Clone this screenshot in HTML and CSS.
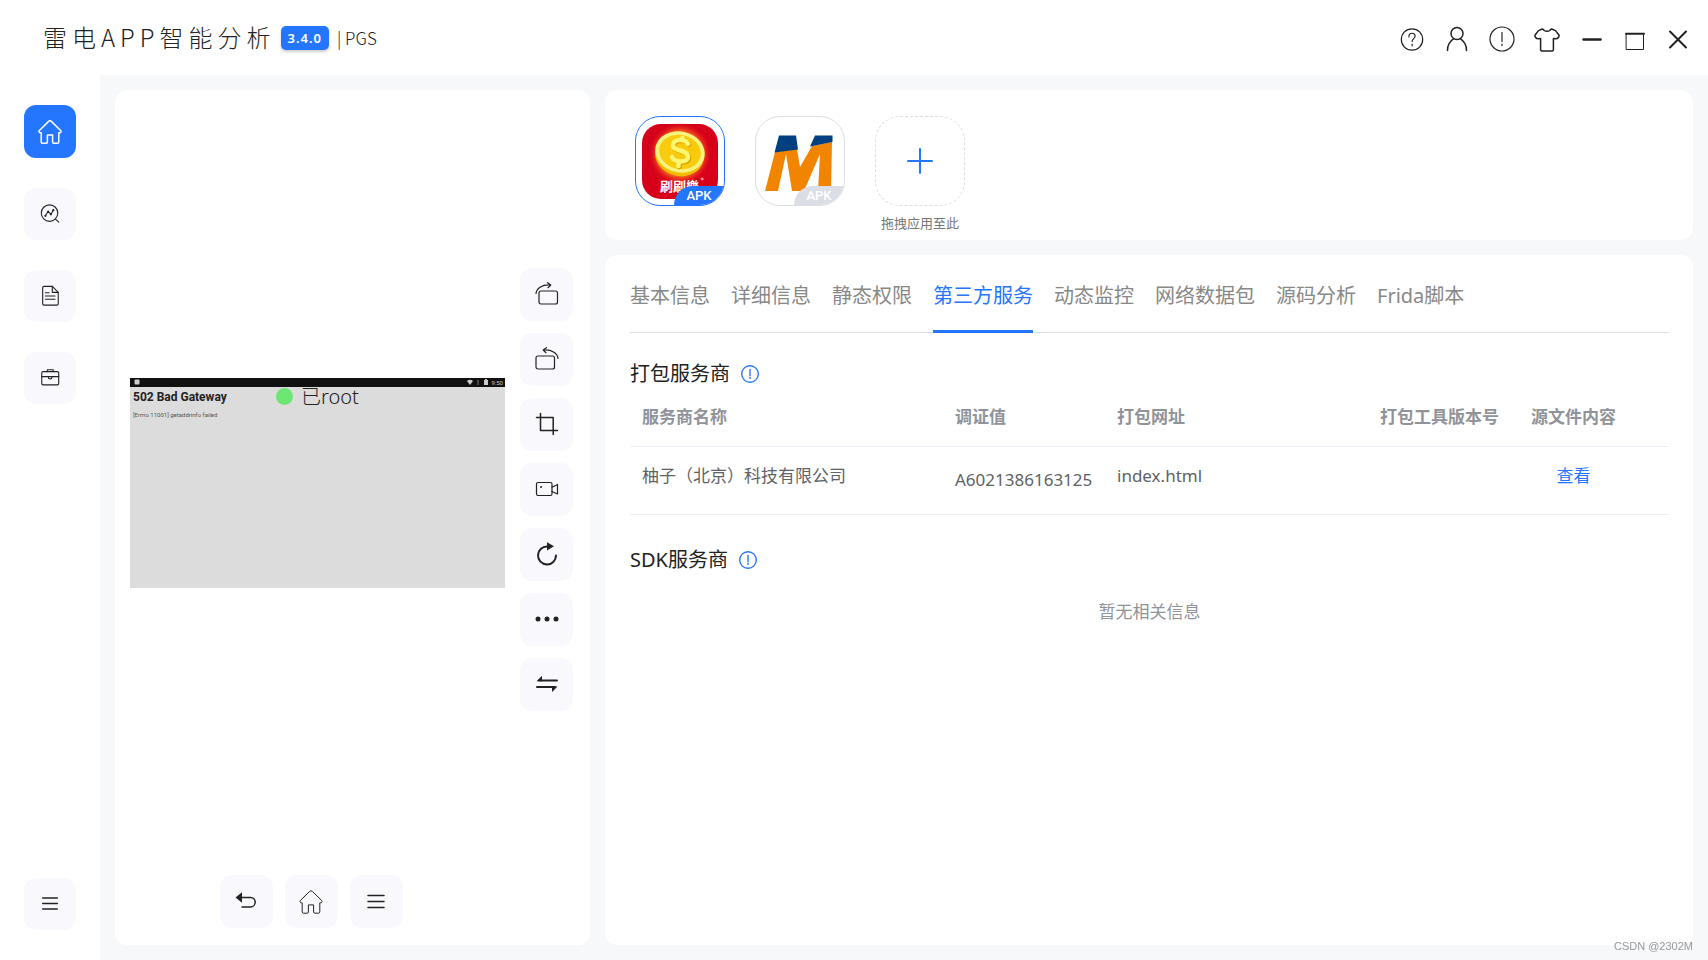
FILE: index.html
```html
<!DOCTYPE html>
<html lang="zh-CN">
<head>
<meta charset="utf-8">
<title>雷电APP智能分析</title>
<link rel="stylesheet" href="styles.css">
</head>
<body>
<svg class="defs" aria-hidden="true">
  <symbol id="i-home" viewBox="0 0 24 24"><path d="M10.6 1.4a2 2 0 0 1 2.800 0l9.200 9.100c.9.9.3 2.300-.9 2.300h-.9v9.100c0 .8-.5 1.300-1.300 1.300h-3.800c-.7 0-1.100-.4-1.100-1.100v-7.200h-5.200v7.200c0 .7-.4 1.100-1.100 1.100H4.500c-.8 0-1.300-.5-1.300-1.300v-9.100h-.9c-1.200 0-1.800-1.400-.9-2.300z"/></symbol>
  <symbol id="i-menu" viewBox="0 0 24 24"><path d="M4 5.500h16M4 11.500h16M4 17.500h16"/></symbol>
  <symbol id="i-alert" viewBox="0 0 26 26"><circle cx="13" cy="13" r="12"/><path d="M13 6.500v9"/><path d="M13 18v1.500"/></symbol>
</svg>
<header class="topbar">
  <h1 class="brand">雷电APP智能分析</h1>
  <span class="version">3.4.0</span>
  <span class="device">| PGS</span>
  <div class="actions">
    <button aria-label="帮助"><svg viewBox="0 0 26 26"><circle cx="13" cy="13.500" r="10.700"/><path d="M9.900 10.800c0-4.800 6.400-4.500 6.200-.6-.1 2.300-3 2.600-3 5.300M13.100 18v1.800"/></svg></button>
    <button aria-label="用户"><svg viewBox="0 0 26 26" class="mid"><circle cx="13" cy="7.500" r="6"/><path d="M3.500 24.500c0-5.500 2.200-9.200 6.300-11.800M22.500 24.500c0-5.500-2.200-9.200-6.300-11.800"/></svg></button>
    <button aria-label="关于"><svg><use href="#i-alert"/></svg></button>
    <button aria-label="换肤"><svg viewBox="0 0 26 26" class="mid"><path d="M8.300 3 4.500 4.600.9 9.300c-.2 1.700 1.400 3.300 3.300 3.500l2.400-.3V24l1 1h10.800l1-1V12.500l2.400.3c1.900-.2 3.500-1.800 3.300-3.500l-3.600-4.700L17.700 3c-.9 0-1.300.8-2.100 1.500-1.200 1-4 1-5.200 0C9.600 3.800 9.200 3 8.300 3z"/></svg></button>
    <div class="window">
      <button aria-label="最小化"><svg viewBox="0 0 26 26" class="heavy"><path d="M4.500 13.500h17"/></svg></button>
      <button aria-label="最大化"><svg viewBox="0 0 26 26" class="thin"><path d="M4.500 7.500h17v16h-17z"/><path d="M4 7.700h18" stroke-width="2"/></svg></button>
      <button aria-label="关闭"><svg viewBox="0 0 26 26" class="bold"><path d="m5 5.500 16 16M21 5.500l-16 16"/></svg></button>
    </div>
  </div>
</header>
<div class="shell">
  <nav class="sidebar" aria-label="主导航">
    <button class="tile active" aria-label="首页"><svg><use href="#i-home"/></svg></button>
    <button class="tile" aria-label="分析"><svg viewBox="0 0 24 24"><circle cx="11.500" cy="11" r="9"/><path d="m18 17.500 3.600 3.400M7 14l3-5 3 3.500 2.800-5.200"/><g class="dots"><circle cx="7" cy="14" r="1.200"/><circle cx="10" cy="9.200" r="1"/><circle cx="12.900" cy="12.400" r="1.200"/><circle cx="15.600" cy="7.800" r="1.200"/></g></svg></button>
    <button class="tile" aria-label="报告"><svg viewBox="0 0 24 24"><path d="M14.500 1.500h-9c-1 0-1.500.5-1.500 1.500v17.500c0 1 .5 1.500 1.500 1.500h14c1 0 1.500-.5 1.500-1.500V8z"/><path d="M14.500 1.500V8H21M7 8.500h4M7 12h10.500M7 15.500h10.500"/></svg></button>
    <button class="tile" aria-label="工具箱"><svg viewBox="0 0 24 24"><rect x="3" y="5" width="18.500" height="14.500" rx="1.500"/><path d="M9 5V3h6.500v2M3 10.500h18.500M10.200 10.500v.8c0 2.400 4 2.400 4 0v-.8"/></svg></button>
    <button class="tile last" aria-label="菜单"><svg class="mid"><use href="#i-menu"/></svg></button>
  </nav>
  <main class="content">
    <section class="card emulator">
      <div class="stage">
        <div class="screen">
          <div class="statusbar">
            <svg class="note" viewBox="0 0 6 6"><rect x=".5" y=".5" width="5" height="5" rx="1"/></svg>
            <svg class="signal" viewBox="0 0 22 6"><path d="M0 2Q3-.5 6 2L3 6z"/><path d="M10 1h2v5h-2z" opacity=".3"/><path d="M17 1h1V0h2v1h1v5h-4z"/></svg>
            <span>9:50</span>
          </div>
          <h2>502 Bad Gateway</h2>
          <p>[Errno 11001] getaddrinfo failed</p>
          <div class="root"><i></i>已root</div>
        </div>
        <div class="tools">
          <button class="tile" aria-label="向右旋转"><svg viewBox="0 0 24 24"><rect x="4" y="9" width="18.500" height="13" rx="2"/><path d="M1 11.500C1.500 6.500 6.500 2.500 15.500 3M12.500.7 15.800 3l-2.800 2.700"/></svg></button>
          <button class="tile" aria-label="向左旋转"><svg viewBox="0 0 24 24"><rect x="1" y="9" width="18.500" height="13" rx="2"/><path d="M23 11.500C22.500 6.500 17.500 2.500 8.500 3M11.500.7 8.200 3 11 5.700"/></svg></button>
          <button class="tile" aria-label="截图"><svg viewBox="0 0 24 24" class="mid"><path d="M5.500 1.500v17h17M1.500 5.500h16.700v17"/></svg></button>
          <button class="tile" aria-label="录屏"><svg viewBox="0 0 24 24"><rect x="1.500" y="5.500" width="15.500" height="13" rx="1.500"/><path d="M17 10.200l5.500-2.700v9.500L17 14.500"/><circle class="dots" cx="6" cy="10" r="1"/></svg></button>
          <button class="tile" aria-label="刷新"><svg viewBox="0 0 24 24" class="bold"><path d="M21 13.500A9 9 0 1 1 12.500 4.500"/><path class="dots" d="M12 .3 19 4.300 12 8.500z"/></svg></button>
          <button class="tile" aria-label="更多"><svg viewBox="0 0 24 24"><g class="dots"><circle cx="3" cy="12" r="2.500"/><circle cx="12" cy="12" r="2.500"/><circle cx="21" cy="12" r="2.500"/></g></svg></button>
          <button class="tile" aria-label="切换"><svg viewBox="0 0 24 24" class="bold"><path d="M4 8.500h18M2 15h18"/><path class="dots" d="M1.500 9.200 7 3.800v5.400zM22.500 14.500 17 20v-5.500z"/></svg></button>
        </div>
      </div>
      <div class="keys">
        <button class="tile" aria-label="返回"><svg viewBox="0 0 24 24" class="mid"><path d="M7 7.500h9.500a4.700 4.700 0 0 1 0 9.400H8"/><path class="dots" d="M1.500 7.500 8 2.200v10.600z"/></svg></button>
        <button class="tile" aria-label="主页"><svg class="thin"><use href="#i-home"/></svg></button>
        <button class="tile" aria-label="任务"><svg class="mid"><use href="#i-menu"/></svg></button>
      </div>
    </section>
    <div class="column">
      <section class="card apps">
        <button class="app selected" aria-label="刷刷乐">
          <svg viewBox="0 0 88 88">
            <defs><radialGradient id="glow"><stop offset=".7" stop-color="#ff7a20" stop-opacity=".8"/><stop offset="1" stop-color="#d9001b" stop-opacity="0"/></radialGradient></defs>
            <rect x="6" y="7" width="76" height="75" rx="19" fill="#d7001a"/>
            <circle cx="44" cy="37" r="32" fill="url(#glow)"/>
            <ellipse cx="43.500" cy="38.500" rx="24.500" ry="20.500" fill="#f2bd00" transform="rotate(12 43.500 38.500)"/>
            <ellipse cx="44" cy="35" rx="25" ry="20.500" fill="#f5f27d" transform="rotate(12 44 35)"/>
            <ellipse cx="44" cy="35" rx="21" ry="17" fill="#facb0c" transform="rotate(12 44 35)"/>
            <g fill="none" stroke-linecap="round" stroke-width="4.500"><path stroke="#d99b00" d="M53 28c-3-6-15-5-15 1 0 7 15 4 15 12 0 6-13 6-16 0M47.500 23v-1M43.500 46v4"/><path stroke="#fbf56f" d="M52 27c-3-6-15-5-15 1 0 7 15 4 15 12 0 6-13 6-16 0M46.500 22v-1M42.500 45v4"/></g>
            <text class="logo-text" x="24" y="74">刷刷樂</text><circle cx="66" cy="62" r="1" fill="none" stroke="#fff" stroke-width=".6"/>
          </svg>
          <span class="tag">APK</span>
        </button>
        <button class="app" aria-label="M">
          <svg viewBox="0 0 88 88"><path fill="#f28500" d="m19 35 22-3 3 18 12-21 20-4-1 49H62l2-37-16 37H36l-6-37-8 37H9z"/><path fill="#003f80" d="M23 18.500h17l2 14-23.500 3zM59 18.500h17.500V25L54 29.500z"/></svg>
          <span class="tag">APK</span>
        </button>
        <div class="add">
          <button class="app drop" aria-label="添加应用"><svg viewBox="0 0 88 88"><path d="M32 44h24M44 32v24"/></svg></button>
          <span>拖拽应用至此</span>
        </div>
      </section>
      <section class="card detail">
        <div class="tabs" role="tablist">
          <button role="tab">基本信息</button><button role="tab">详细信息</button><button role="tab">静态权限</button><button role="tab" class="current" aria-selected="true">第三方服务</button><button role="tab">动态监控</button><button role="tab">网络数据包</button><button role="tab">源码分析</button><button role="tab">Frida脚本</button>
        </div>
        <h2 class="heading">打包服务商<svg><use href="#i-alert"/></svg></h2>
        <table>
          <colgroup><col class="c-name"><col class="c-id"><col class="c-url"><col class="c-ver"><col class="c-src"></colgroup>
          <thead><tr><th>服务商名称</th><th>调证值</th><th>打包网址</th><th>打包工具版本号</th><th class="center">源文件内容</th></tr></thead>
          <tbody><tr><td>柚子（北京）科技有限公司</td><td class="id">A6021386163125</td><td>index.html</td><td></td><td class="center"><a href="#">查看</a></td></tr></tbody>
        </table>
        <h2 class="heading sdk">SDK服务商<svg><use href="#i-alert"/></svg></h2>
        <p class="empty">暂无相关信息</p>
      </section>
    </div>
  </main>
</div>
<div class="watermark">CSDN @2302M</div>
</body>
</html>
```
FILE: styles.css
```css
* { box-sizing: border-box; }
body {
  margin: 0;
  min-height: 100vh;
  display: flex;
  flex-direction: column;
  background: #fff;
  color: #222;
  font-family: "Noto Sans", "Noto Sans CJK SC", sans-serif;
  font-weight: 400;
}
h1, h2, p { margin: 0; font-weight: inherit; }
button {
  padding: 0;
  border: 0;
  background: none;
  color: inherit;
  font: inherit;
  cursor: pointer;
}
svg {
  display: block;
  fill: none;
  stroke: currentColor;
  stroke-width: 1.2;
  stroke-linecap: round;
  stroke-linejoin: round;
}
.dots { fill: currentColor; stroke: none; }
.defs { position: absolute; width: 0; height: 0; }
.thin { stroke-width: 1; }
.mid { stroke-width: 1.5; }
.bold { stroke-width: 2; }
.heavy { stroke-width: 2.5; }

.topbar {
  display: flex;
  align-items: center;
  height: 75px;
  padding: 0 15px 0 43px;
}
.brand {
  padding-bottom: 2px;
  font-family: "Noto Sans CJK SC", sans-serif;
  font-weight: 300;
  font-size: 24px;
  line-height: 36px;
  letter-spacing: 5px;
}
.version {
  margin-left: 5px;
  padding: 0 7px;
  border-radius: 5px;
  background: #2475ff;
  color: #fff;
  font-size: 13px;
  font-weight: 600;
  line-height: 24px;
  letter-spacing: 1px;
  box-shadow: 0 2px 3px #0003;
}
.device { margin-left: 8px; font-family: "Noto Sans CJK SC", sans-serif; font-size: 17px; font-weight: 300; }
.actions { display: flex; gap: 15px; margin-left: auto; padding-top: 3px; }
.actions button { display: grid; place-items: center; width: 30px; height: 30px; }
.actions svg { width: 26px; height: 26px; }
.window { display: flex; gap: 13px; }

.shell { flex: 1; display: flex; }
.sidebar {
  display: flex;
  flex-direction: column;
  gap: 30px;
  width: 100px;
  padding: 30px 24px;
}
.tile {
  display: grid;
  place-items: center;
  width: 52px;
  height: 52px;
  border-radius: 12px;
  background: #f9f9fd;
}
.tile svg { width: 24px; height: 24px; }
.sidebar .tile:not(.active) svg { width: 22px; height: 22px; }
.tile.active { height: 53px; background: #2475ff; color: #fff; }
.tile.active svg { stroke-width: 1.5; }
.tile.last { margin-top: auto; }

.content {
  flex: 1;
  display: flex;
  gap: 15px;
  min-width: 0;
  padding: 15px;
  background: #f6f8fa;
}
.card { border-radius: 12px; background: #fff; }
.emulator {
  display: flex;
  flex-direction: column;
  flex: 0 0 475px;
  padding: 0 17px 17px 15px;
}
.emulator .tile { width: 53px; height: 53px; }
.stage { flex: 1; display: flex; align-items: center; gap: 15px; }
.screen {
  position: relative;
  flex: 1;
  aspect-ratio: 375 / 210;
  background: #dcdcdc;
  font-family: Roboto, sans-serif;
}
.statusbar {
  display: flex;
  align-items: center;
  gap: 2px;
  height: 9px;
  padding: 0 2px 0 4px;
  background: #111;
  color: #ccc;
  font-size: 6px;
  line-height: 9px;
}
.statusbar svg { height: 6px; fill: currentColor; stroke: none; }
.statusbar .note { width: 6px; }
.statusbar .signal { width: 22px; margin-left: auto; }
.screen h2 { padding: 3px 3px 0; font-size: 12px; line-height: 14px; font-weight: 700; }
.screen p { padding: 6px 3px 0; font-size: 6px; line-height: 10px; color: #555; }
.root {
  position: absolute;
  top: 4px;
  left: 146px;
  display: flex;
  align-items: center;
  gap: 8px;
  font: 300 20px/30px "Noto Sans", "Noto Sans CJK SC", sans-serif;
}
.root i { width: 17px; height: 17px; border-radius: 50%; background: #6de673; }
.tools { display: flex; flex-direction: column; gap: 12px; padding-top: 13px; }
.keys { display: flex; justify-content: center; gap: 12px; padding-right: 81px; }

.column { flex: 1; display: flex; flex-direction: column; gap: 15px; min-width: 0; }
.apps { display: flex; align-items: flex-start; gap: 30px; height: 150px; padding: 26px 30px 0; }
.app {
  position: relative;
  overflow: hidden;
  width: 90px;
  height: 90px;
  border: 1px solid #dcdee6;
  border-radius: 25px;
}
.app svg { width: 88px; height: 88px; stroke: none; }
.logo-text { fill: #fff; font: 700 13px "Noto Sans CJK TC", sans-serif; }
.tag {
  position: absolute;
  right: 0;
  bottom: 0;
  width: 50px;
  border-radius: 20px 0 0 0;
  background: #dcdee6;
  color: #fff;
  font: 500 13px/19px Roboto, sans-serif;
}
.app.selected { border-color: #2475ff; }
.selected .tag { background: #2475ff; }
.app.drop { border-style: dashed; }
.drop svg { stroke: #2475ff; stroke-width: 2; }
.add { display: flex; flex-direction: column; align-items: center; gap: 8px; width: 90px; color: #777; font-size: 13px; line-height: 18px; white-space: nowrap; }

.detail { flex: 1; padding: 20px 24px 20px 25px; }
.tabs {
  display: flex;
  gap: 21px;
  height: 58px;
  border-bottom: 1px solid #dcdee6;
  color: #888;
  font-size: 20px;
}
.tabs button { height: 58px; padding-bottom: 17px; border-bottom: 3px solid transparent; white-space: nowrap; }
.tabs .current { border-color: #2475ff; color: #2475ff; }
.heading { display: flex; align-items: center; gap: 11px; margin-top: 27px; font-size: 20px; line-height: 28px; }
.heading svg { width: 18px; height: 18px; color: #2475ff; stroke-width: 2; }
table {
  width: 100%;
  table-layout: fixed;
  border-collapse: collapse;
  font-size: 17px;
  line-height: 24px;
}
.c-name { width: 313px; }
.c-id { width: 162px; }
.c-url { width: 263px; }
.c-ver { width: 136px; }
th, td { padding: 0 0 0 12px; border-bottom: 1px solid #ebeef5; text-align: left; white-space: nowrap; }
th { height: 58px; color: #909399; font-weight: 700; }
td { height: 68px; padding-bottom: 8px; color: #606266; }
td.id { padding-bottom: 0; }
th.center, td.center { padding-right: 26px; padding-left: 0; text-align: center; }
td a { color: #2475ff; text-decoration: none; }
.heading.sdk { margin-top: 31px; }
.empty { margin-top: 26px; color: #909399; font-size: 17px; line-height: 24px; text-align: center; }
.watermark {
  position: fixed;
  right: 15px;
  bottom: 6px;
  color: #999;
  font: 400 11px/16px "Liberation Sans", sans-serif;
}
```
